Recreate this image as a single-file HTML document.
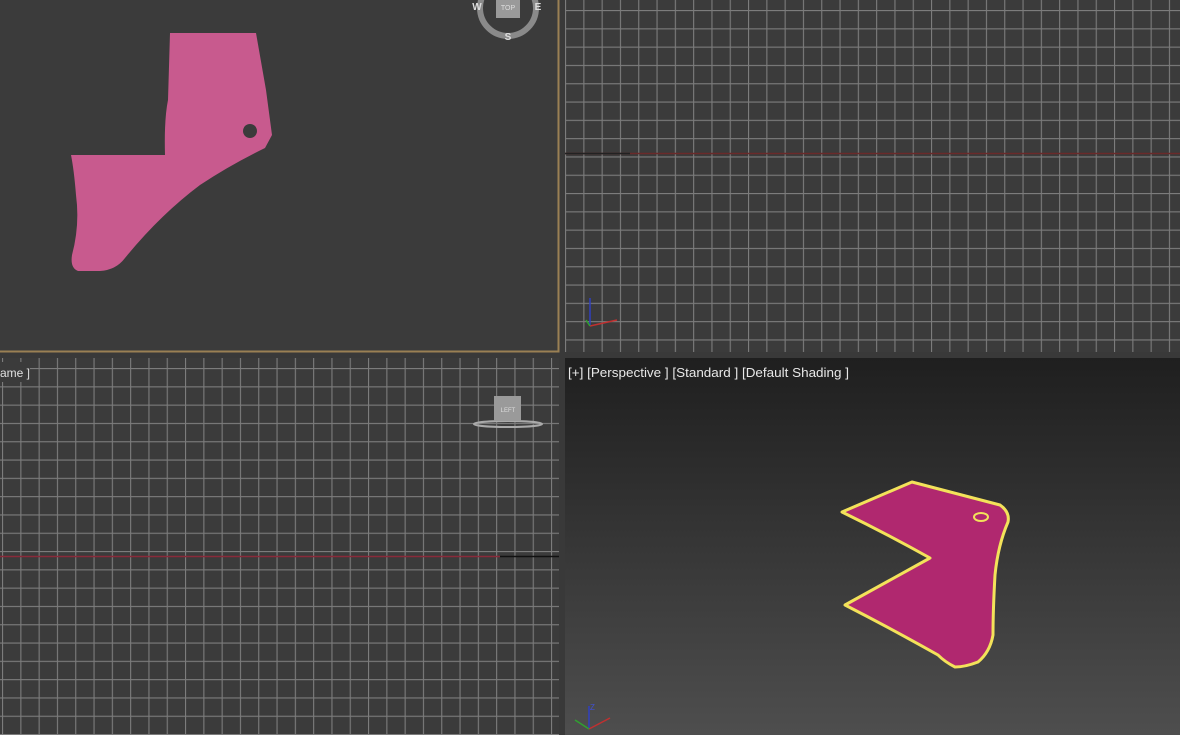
<!DOCTYPE html><html><head><style>html,body{margin:0;padding:0;width:1180px;height:735px;overflow:hidden;background:#393939}svg{display:block}</style></head><body>
<svg width="1180" height="735" xmlns="http://www.w3.org/2000/svg">
<defs>
<pattern id="g" x="565" y="10" width="18.3" height="18.3" patternUnits="userSpaceOnUse"><rect width="18.3" height="18.3" fill="#3b3b3b"/><path d="M0 0.5H18.3M0.5 0V18.3" stroke="#7c7c7c" stroke-width="1.2"/></pattern>
<pattern id="g2" x="2" y="368" width="18.3" height="18.3" patternUnits="userSpaceOnUse"><rect width="18.3" height="18.3" fill="#3b3b3b"/><path d="M0 0.5H18.3M0.5 0V18.3" stroke="#7c7c7c" stroke-width="1.2"/></pattern>
<linearGradient id="p" x1="0" y1="0" x2="0" y2="1"><stop offset="0" stop-color="#1f1f1f"/><stop offset="1" stop-color="#4e4e4e"/></linearGradient>
</defs>
<rect width="1180" height="735" fill="#393939"/>
<rect x="0" y="0" width="558" height="352" fill="#3b3b3b"/>
<path d="M0 351.5H558.5V0" fill="none" stroke="#9a8054" stroke-width="2"/>
<path d="M170 33L256 33L266 90L272 135L265 148Q230 165 200 185Q160 215 125 258Q116 270 100 271L78 271Q70 268 72 255Q80 225 76 195Q74 170 71 155L165 155Q164 120 168 100Z" fill="#c85a8e"/>
<circle cx="250" cy="131" r="7" fill="#3b3b3b"/>
<circle cx="508" cy="8" r="28" fill="none" stroke="#8a8a8a" stroke-width="6"/>
<rect x="496" y="-4" width="24" height="22" fill="#9a9a9a"/>
<text x="508" y="10" font-family="Liberation Sans" font-size="7" fill="#ddd" text-anchor="middle">TOP</text>
<text x="477" y="10" font-family="Liberation Sans" font-size="10" font-weight="bold" fill="#ddd" text-anchor="middle">W</text>
<text x="538" y="10" font-family="Liberation Sans" font-size="10" font-weight="bold" fill="#ddd" text-anchor="middle">E</text>
<text x="508" y="40" font-family="Liberation Sans" font-size="10" font-weight="bold" fill="#ddd" text-anchor="middle">S</text>
<rect x="565" y="0" width="615" height="352" fill="url(#g)"/>
<path d="M565 153.5H1180" stroke="#6a2a2a" stroke-width="1.5"/>
<path d="M565 153.5H630" stroke="#222" stroke-width="1.5"/>
<path d="M590 326V298" stroke="#3040c0" stroke-width="1.5"/><path d="M590 326L617 320" stroke="#c03030" stroke-width="1.5"/><path d="M590 326L586 320" stroke="#30a030" stroke-width="1.5"/>
<rect x="0" y="358" width="559" height="377" fill="url(#g2)"/>
<path d="M0 556.5H500" stroke="#8a2a3a" stroke-width="1.5"/><path d="M500 556.5H559" stroke="#111" stroke-width="1.5"/>
<rect x="0" y="362" width="30" height="20" fill="#3b3b3b"/>
<text x="0" y="377" font-family="Liberation Sans" font-size="12" fill="#e0e0e0">ame ]</text>
<ellipse cx="508" cy="424" rx="34" ry="3" fill="none" stroke="#aaa" stroke-width="2"/>
<rect x="494" y="396" width="27" height="25" fill="#9a9a9a"/>
<text x="508" y="412" font-family="Liberation Sans" font-size="6" fill="#ddd" text-anchor="middle">LEFT</text>
<rect x="565" y="358" width="615" height="377" fill="url(#p)"/>
<text x="568" y="377" font-family="Liberation Sans" font-size="13" fill="#e8e8e8" textLength="281" lengthAdjust="spacingAndGlyphs">[+] [Perspective ] [Standard ] [Default Shading ]</text>
<path d="M842 512L912 482L1000 505Q1010 512 1008 522Q998 545 995 575Q993 610 993 635Q990 652 978 662Q965 667 955 667Q945 662 938 655Q890 628 845 605Q890 580 930 558Q885 533 842 512Z" fill="#b0286f" stroke="#f3e25a" stroke-width="3" stroke-linejoin="round"/>
<ellipse cx="981" cy="517" rx="7" ry="4" fill="#b0286f" stroke="#f3e25a" stroke-width="2"/>
<path d="M589 729V706" stroke="#3040c0" stroke-width="1.5"/><path d="M589 729L610 718" stroke="#c03030" stroke-width="1.5"/><path d="M589 729L575 720" stroke="#30a030" stroke-width="1.5"/>
<text x="590" y="710" font-family="Liberation Sans" font-size="8" fill="#4050d0">Z</text>
</svg>
</body></html>
